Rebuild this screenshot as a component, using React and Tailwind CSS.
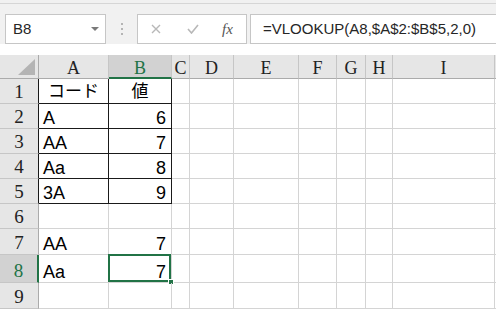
const cols = ["A", "B", "C", "D", "E", "F", "G", "H", "I", ""];

const rows = [
  { n: 1, a: "コード", b: "値", head: true, table: true },
  { n: 2, a: "A", b: "6", table: true },
  { n: 3, a: "AA", b: "7", table: true },
  { n: 4, a: "Aa", b: "8", table: true },
  { n: 5, a: "3A", b: "9", table: true },
  { n: 6 },
  { n: 7, a: "AA", b: "7" },
  { n: 8, a: "Aa", b: "7", active: true },
  { n: 9 },
];

const cellFont = "font-['Liberation_Sans','Noto_Sans_CJK_JP',sans-serif]";
const headFont = "font-['Liberation_Serif','Noto_Serif_CJK_JP',serif]";

function Toolbar() {
  return (
    <div className="bg-[#f1f1f1]">
      <div className="h-[4px] border-b border-[#d6d6d6]" />
      <div className="flex items-stretch h-[30px] mt-[10px] mb-[11px]">
        {/* name box */}
        <div className="ml-[5px] w-[101px] bg-white border border-[#c6c6c6] flex items-center justify-between pl-[7px] pr-[6px]">
          <span className={`text-[15px] text-[#262626] ${cellFont}`}>B8</span>
          <svg width="8" height="4" viewBox="0 0 8 4">
            <path d="M0 0h8L4 4z" fill="#7a7a7a" />
          </svg>
        </div>
        <div className="w-[31px] flex flex-col items-center justify-center gap-[3px]">
          <span className="w-[2px] h-[2px] bg-[#b4b4b4]" />
          <span className="w-[2px] h-[2px] bg-[#b4b4b4]" />
          <span className="w-[2px] h-[2px] bg-[#b4b4b4]" />
        </div>
        {/* cancel / enter / fx */}
        <div className="w-[110px] bg-white border border-[#c6c6c6] flex items-center">
          <svg className="ml-[13px]" width="10" height="10" viewBox="0 0 10 10">
            <path d="M1 1l8 8M9 1l-8 8" stroke="#b8b8b8" strokeWidth="1.4" />
          </svg>
          <svg className="ml-[26px]" width="12" height="10" viewBox="0 0 12 10">
            <path d="M1 5l3.5 4L11 1" stroke="#b8b8b8" strokeWidth="1.6" fill="none" />
          </svg>
          <span className="ml-[23px] italic text-[15px] text-[#555] font-['Liberation_Serif',serif] leading-none">
            fx
          </span>
        </div>
        {/* formula */}
        <div className="ml-[3px] flex-1 -mr-[4px] bg-white border border-[#c6c6c6] flex items-center pl-[12px]">
          <span className={`text-[15px] text-[#262626] ${cellFont}`}>
            =VLOOKUP(A8,$A$2:$B$5,2,0)
          </span>
        </div>
      </div>
    </div>
  );
}

function Sheet() {
  return (
    <div className="grid grid-cols-[39px_70px_63px_18px_44px_65px_38px_29px_27px_102px_60px] grid-rows-[24px_25px_25px_25px_25px_25px_25px_26px_28px_26px]">
      {/* corner */}
      <div className="bg-[#e6e6e6] border-r border-b border-[#ababab] flex items-end justify-end pr-[3px] pb-[3px]">
        <svg width="17" height="16" viewBox="0 0 17 16">
          <path d="M17 0v16H0z" fill="#b4b4b4" />
        </svg>
      </div>
      {cols.map((c, i) =>
        c === "B" ? (
          <div
            key={i}
            className={`bg-[#d2d2d2] border-r border-[#c6c6c6] border-b-2 border-b-[#217346] flex justify-center pt-[3px] text-[18px] leading-[20px] text-[#217346] ${headFont}`}
          >
            {c}
          </div>
        ) : (
          <div
            key={i}
            className={`bg-[#e6e6e6] border-r border-[#c6c6c6] border-b border-b-[#ababab] flex justify-center pt-[3px] text-[18px] leading-[20px] text-[#222] ${headFont}`}
          >
            {c}
          </div>
        )
      )}

      {rows.map((r) => (
        <Row key={r.n} r={r} />
      ))}
    </div>
  );
}

function Row({ r }) {
  const headCls = r.active
    ? "bg-[#d2d2d2] text-[#217346] border-r-2 border-r-[#217346]"
    : r.table
    ? "bg-[#e6e6e6] text-[#222] border-r border-r-[#1a1a1a]"
    : "bg-[#e6e6e6] text-[#222] border-r border-r-[#ababab]";
  const line = r.table ? "border-[#1a1a1a]" : "border-[#d4d4d4]";

  return (
    <>
      <div
        className={`${headCls} border-b border-b-[#c6c6c6] flex items-end justify-center text-[19px] leading-[20px] pb-[1px] ${headFont}`}
      >
        {r.n}
      </div>
      <div
        className={`border-r border-b ${line} flex items-end ${
          r.head ? "justify-center text-[17px] pb-[1px]" : "pl-[4px] text-[18px]"
        } leading-[20px] text-black ${cellFont}`}
      >
        {r.a}
      </div>
      <div
        className={`relative border-r border-b ${line} flex items-end ${
          r.head ? "justify-center text-[17px] pb-[1px]" : "justify-end pr-[5px] text-[18px]"
        } leading-[20px] text-black ${cellFont}`}
      >
        {r.b}
        {r.active && (
          <>
            <div className="absolute -left-[1px] -top-[1px] w-[calc(100%+1px)] h-[calc(100%+1px)] border-2 border-[#217346]" />
            <div className="absolute -right-[3px] -bottom-[3px] w-[6px] h-[6px] bg-[#217346] border border-white" />
          </>
        )}
      </div>
      {cols.slice(2).map((c, i) => (
        <div key={i} className="border-r border-b border-[#d4d4d4]" />
      ))}
    </>
  );
}

export default function App() {
  return (
    <div className="w-[496px] h-[309px] overflow-hidden bg-white">
      <Toolbar />
      <Sheet />
    </div>
  );
}
